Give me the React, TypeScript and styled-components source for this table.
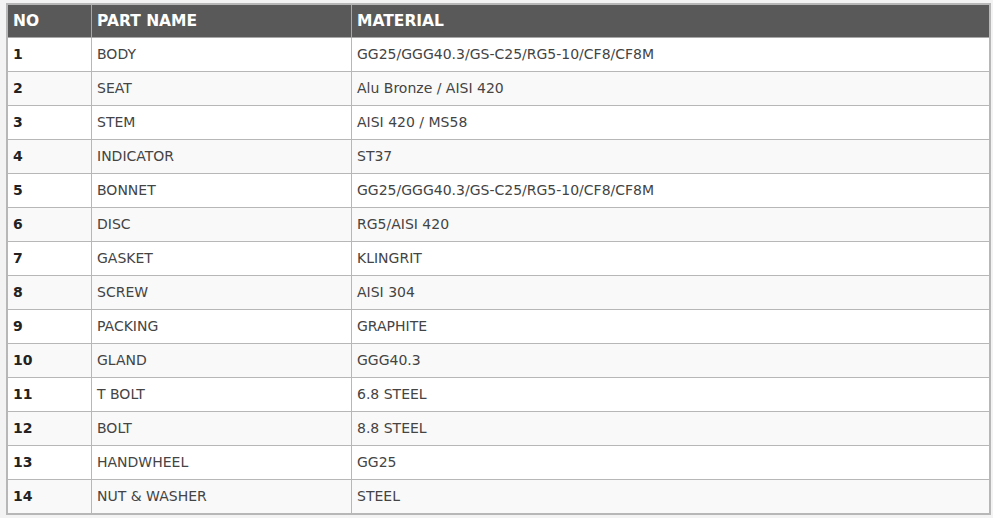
import React from "react";
import styled, { createGlobalStyle } from "styled-components";

interface IPart {
    no: number;
    name: string;
    material: string;
}

const parts: IPart[] = [
    { no: 1, name: "BODY", material: "GG25/GGG40.3/GS-C25/RG5-10/CF8/CF8M" },
    { no: 2, name: "SEAT", material: "Alu Bronze / AISI 420" },
    { no: 3, name: "STEM", material: "AISI 420 / MS58" },
    { no: 4, name: "INDICATOR", material: "ST37" },
    { no: 5, name: "BONNET", material: "GG25/GGG40.3/GS-C25/RG5-10/CF8/CF8M" },
    { no: 6, name: "DISC", material: "RG5/AISI 420" },
    { no: 7, name: "GASKET", material: "KLINGRIT" },
    { no: 8, name: "SCREW", material: "AISI 304" },
    { no: 9, name: "PACKING", material: "GRAPHITE" },
    { no: 10, name: "GLAND", material: "GGG40.3" },
    { no: 11, name: "T BOLT", material: "6.8 STEEL" },
    { no: 12, name: "BOLT", material: "8.8 STEEL" },
    { no: 13, name: "HANDWHEEL", material: "GG25" },
    { no: 14, name: "NUT & WASHER", material: "STEEL" },
];

const GlobalStyle = createGlobalStyle`
    body {
        margin: 0;
        background: #f3f3f3;
        font-family: "DejaVu Sans", "Noto Sans", sans-serif;
    }
`

const Wrapper = styled.div`
    padding: 3px 2px 0 6px;
`

const PartsTable = styled.table`
    width: 985px;
    border-collapse: collapse;
    border: 2px solid #b7b7b7;
    font-size: 14px;
    color: #444;

    & th, & td {
        border: 1px solid #b7b7b7;
        text-align: left;
        padding: 0 4px 1px 5px;
    }

    & th {
        background: #595959;
        color: #fff;
        font-size: 15.5px;
        font-weight: 700;
        height: 31px;
        border-color: #a8a8a8;
    }

    & td {
        height: 32px;
    }

    & tbody tr:nth-child(odd) td {
        background: #fff;
    }

    & tbody tr:nth-child(even) td {
        background: #f9f9f9;
    }
`

const NoCell = styled.td`
    width: 74px;
    font-weight: 700;
    color: #222;
`

const NameCell = styled.td`
    width: 250px;
`

function App() {
    return (
        <Wrapper>
            <GlobalStyle />
            <PartsTable>
                <thead>
                    <tr>
                        <th>NO</th>
                        <th>PART NAME</th>
                        <th>MATERIAL</th>
                    </tr>
                </thead>
                <tbody>
                    {
                        parts.map(part =>
                            <tr key={part.no}>
                                <NoCell>{part.no}</NoCell>
                                <NameCell>{part.name}</NameCell>
                                <td>{part.material}</td>
                            </tr>
                        )
                    }
                </tbody>
            </PartsTable>
        </Wrapper>
    )
}

export default App;
